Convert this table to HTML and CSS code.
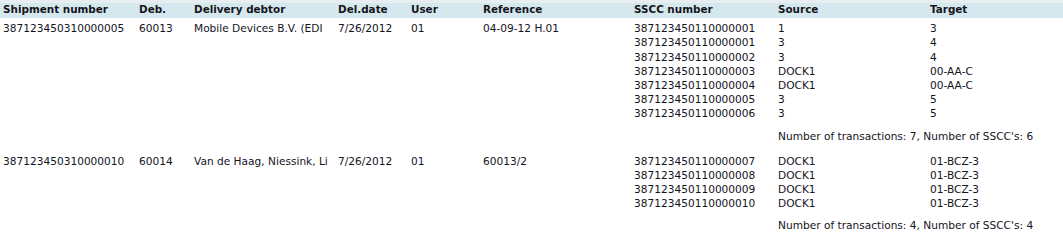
FILE: index.html
```html
<!DOCTYPE html>
<html lang="en">
<head>
<meta charset="utf-8">
<title>Shipments</title>
<link rel="stylesheet" href="styles.css">
</head>
<body>
<div class="report">
  <div class="head">
    <div class="hcell">Shipment number</div>
    <div class="hcell">Deb.</div>
    <div class="hcell">Delivery debtor</div>
    <div class="hcell">Del.date</div>
    <div class="hcell">User</div>
    <div class="hcell">Reference</div>
    <div class="hcell">SSCC number</div>
    <div class="hcell">Source</div>
    <div class="hcell">Target</div>
  </div>

  <div class="group">
    <div class="cell">387123450310000005</div>
    <div class="cell">60013</div>
    <div class="cell debtor">Mobile Devices B.V. (EDI</div>
    <div class="cell">7/26/2012</div>
    <div class="cell">01</div>
    <div class="cell">04-09-12 H.01</div>
    <div class="lines">
      <div class="cell">387123450110000001</div><div class="cell">1</div><div class="cell">3</div>
      <div class="cell">387123450110000001</div><div class="cell">3</div><div class="cell">4</div>
      <div class="cell">387123450110000002</div><div class="cell">3</div><div class="cell">4</div>
      <div class="cell">387123450110000003</div><div class="cell">DOCK1</div><div class="cell">00-AA-C</div>
      <div class="cell">387123450110000004</div><div class="cell">DOCK1</div><div class="cell">00-AA-C</div>
      <div class="cell">387123450110000005</div><div class="cell">3</div><div class="cell">5</div>
      <div class="cell">387123450110000006</div><div class="cell">3</div><div class="cell">5</div>
      <div class="cell summary">Number of transactions: 7, Number of SSCC's: 6</div>
    </div>
  </div>

  <div class="group">
    <div class="cell">387123450310000010</div>
    <div class="cell">60014</div>
    <div class="cell debtor">Van de Haag, Niessink, Li</div>
    <div class="cell">7/26/2012</div>
    <div class="cell">01</div>
    <div class="cell">60013/2</div>
    <div class="lines">
      <div class="cell">387123450110000007</div><div class="cell">DOCK1</div><div class="cell">01-BCZ-3</div>
      <div class="cell">387123450110000008</div><div class="cell">DOCK1</div><div class="cell">01-BCZ-3</div>
      <div class="cell">387123450110000009</div><div class="cell">DOCK1</div><div class="cell">01-BCZ-3</div>
      <div class="cell">387123450110000010</div><div class="cell">DOCK1</div><div class="cell">01-BCZ-3</div>
      <div class="cell summary">Number of transactions: 4, Number of SSCC's: 4</div>
    </div>
  </div>
</div>
</body>
</html>
```

FILE: styles.css
```css
html, body {
  margin: 0;
  padding: 0;
  background: #ffffff;
}

body {
  font-family: "DejaVu Sans", Verdana, sans-serif;
  font-size: 10.6px;
  color: #14141c;
}

.report {
  border-top: 3px solid #e6eef1;
}

.head {
  display: grid;
  grid-template-columns: 136px 55px 144px 73px 72px 151px 144px 152px 1fr;
  height: 15px;
  line-height: 13px;
  background: #d5e8ee;
  font-weight: bold;
  font-size: 10.4px;
}

.hcell {
  padding-left: 3px;
  white-space: nowrap;
  overflow: hidden;
}

.group {
  display: grid;
  grid-template-columns: 136px 55px 144px 73px 72px 151px 1fr;
  padding: 3.2px 0 7.5px;
  line-height: 14.2px;
}

.cell {
  padding-left: 3px;
  white-space: nowrap;
  overflow: hidden;
}

.debtor {
  margin-right: 4px;
}

.lines {
  display: grid;
  grid-template-columns: 144px 152px 1fr;
}

.summary {
  grid-column: 2 / 4;
  padding-top: 8px;
}
```
